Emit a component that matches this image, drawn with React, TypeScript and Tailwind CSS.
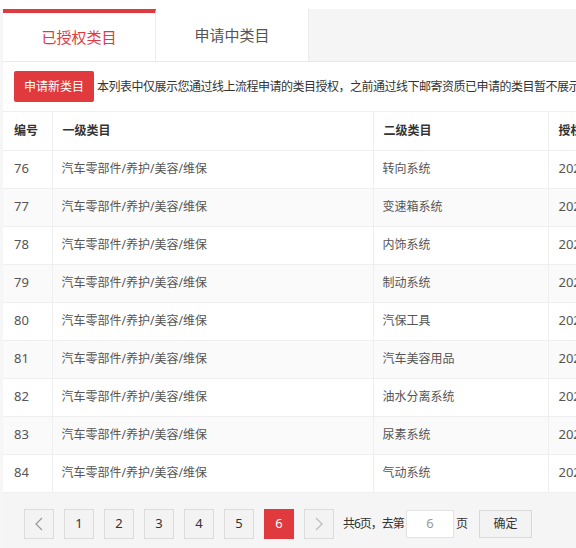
const rows = [
  { id: 76, sub: "转向系统" },
  { id: 77, sub: "变速箱系统" },
  { id: 78, sub: "内饰系统" },
  { id: 79, sub: "制动系统" },
  { id: 80, sub: "汽保工具" },
  { id: 81, sub: "汽车美容用品" },
  { id: 82, sub: "油水分离系统" },
  { id: 83, sub: "尿素系统" },
  { id: 84, sub: "气动系统" },
];

const pages = [1, 2, 3, 4, 5, 6];

function PageButton({
  children,
  active,
  muted,
}: {
  children: React.ReactNode;
  active?: boolean;
  muted?: boolean;
}) {
  return (
    <button
      className={
        active
          ? "w-[30px] h-[30px] flex items-center justify-center bg-[#e0393e] border border-[#e0393e] text-white text-[13px]"
          : muted
          ? "w-[30px] h-[30px] flex items-center justify-center bg-[#f3f3f3] border border-[#dcdcdc] text-[#aaa] text-[13px]"
          : "w-[30px] h-[30px] flex items-center justify-center bg-[#f3f3f3] border border-[#dcdcdc] text-[#333] text-[13px]"
      }
    >
      {children}
    </button>
  );
}

export default function App() {
  return (
    <div
      className="w-[576px] h-[548px] overflow-hidden bg-[#f6f6f6]"
      style={{ fontFamily: '"Noto Sans", "Noto Sans CJK SC", sans-serif' }}
    >
      <div className="h-[9px] bg-white" />
      <div className="ml-[3px] w-[1100px] bg-white">
        {/* Tabs */}
        <div className="flex h-[53px] bg-[#f5f5f5] border-b border-[#e8e8e8]">
          <div className="w-[153px] bg-white border-t-4 border-[#e0393e] border-r border-r-[#ececec] flex items-center justify-center text-[15px] text-[#e0393e]">
            已授权类目
          </div>
          <div className="w-[153px] bg-white border-r border-[#ececec] flex items-center justify-center text-[15px] text-[#555]">
            申请中类目
          </div>
        </div>

        {/* Notice */}
        <div className="h-[50px] flex items-center pl-[11px] border-b border-[#efefef]">
          <button className="h-[31px] px-[10px] bg-[#e0393e] rounded-[2px] text-white text-[12px]">
            申请新类目
          </button>
          <span className="ml-[3px] text-[12px] text-[#333] whitespace-nowrap tracking-[-0.5px]">
            本列表中仅展示您通过线上流程申请的类目授权，之前通过线下邮寄资质已申请的类目暂不展示，如有疑问请联系客服。
          </span>
        </div>

        {/* Table */}
        <table className="table-fixed border-collapse text-[12px]">
          <colgroup>
            <col className="w-[49px]" />
            <col className="w-[321px]" />
            <col className="w-[175px]" />
            <col className="w-[200px]" />
          </colgroup>
          <thead>
            <tr className="h-[38px] text-[#333]">
              <th className="text-left font-bold pl-[11px] border-b border-r border-[#efefef]">编号</th>
              <th className="text-left font-bold pl-[10px] border-b border-r border-[#efefef]">一级类目</th>
              <th className="text-left font-bold pl-[10px] border-b border-r border-[#efefef]">二级类目</th>
              <th className="text-left font-bold pl-[10px] border-b border-[#efefef]">授权时间</th>
            </tr>
          </thead>
          <tbody>
            {rows.map((r, i) => (
              <tr
                key={r.id}
                className={i % 2 === 1 ? "h-[38px] bg-[#fafafa] text-[#555]" : "h-[38px] bg-white text-[#555]"}
              >
                <td className="pl-[11px] text-[13px] border-b border-r border-[#efefef]">{r.id}</td>
                <td className="pl-[9px] border-b border-r border-[#efefef]">汽车零部件/养护/美容/维保</td>
                <td className="pl-[9px] border-b border-r border-[#efefef]">{r.sub}</td>
                <td className="pl-[10px] text-[13px] border-b border-[#efefef]">2020-06-18</td>
              </tr>
            ))}
          </tbody>
        </table>
      </div>

      {/* Pagination */}
      <div className="ml-[3px] h-[56px] pt-[16px] pl-[21px] flex items-start bg-[#f5f5f5]">
        <div className="flex items-center gap-[10px]">
          <PageButton muted>
            <svg width="8" height="14" viewBox="0 0 8 14" fill="none">
              <path d="M7 1L1 7l6 6" stroke="#999" strokeWidth="1.2" />
            </svg>
          </PageButton>
          {pages.map((p) => (
            <PageButton key={p} active={p === 6}>
              {p}
            </PageButton>
          ))}
          <PageButton muted>
            <svg width="8" height="14" viewBox="0 0 8 14" fill="none">
              <path d="M1 1l6 6-6 6" stroke="#bbb" strokeWidth="1.2" />
            </svg>
          </PageButton>
        </div>
        <div className="flex items-center h-[30px] ml-[9px] text-[12px] text-[#333]">
          <span className="tracking-[-1px]">共6页，去第</span>
          <div className="ml-[2px] w-[48px] h-[28px] bg-white border border-[#e3e3e3] flex items-center justify-center text-[13px] text-[#999]">
            6
          </div>
          <span className="ml-[2px]">页</span>
          <button className="ml-[11px] w-[53px] h-[28px] bg-[#f3f3f3] border border-[#d9d9d9] text-[12px] text-[#333]">
            确定
          </button>
        </div>
      </div>
    </div>
  );
}
